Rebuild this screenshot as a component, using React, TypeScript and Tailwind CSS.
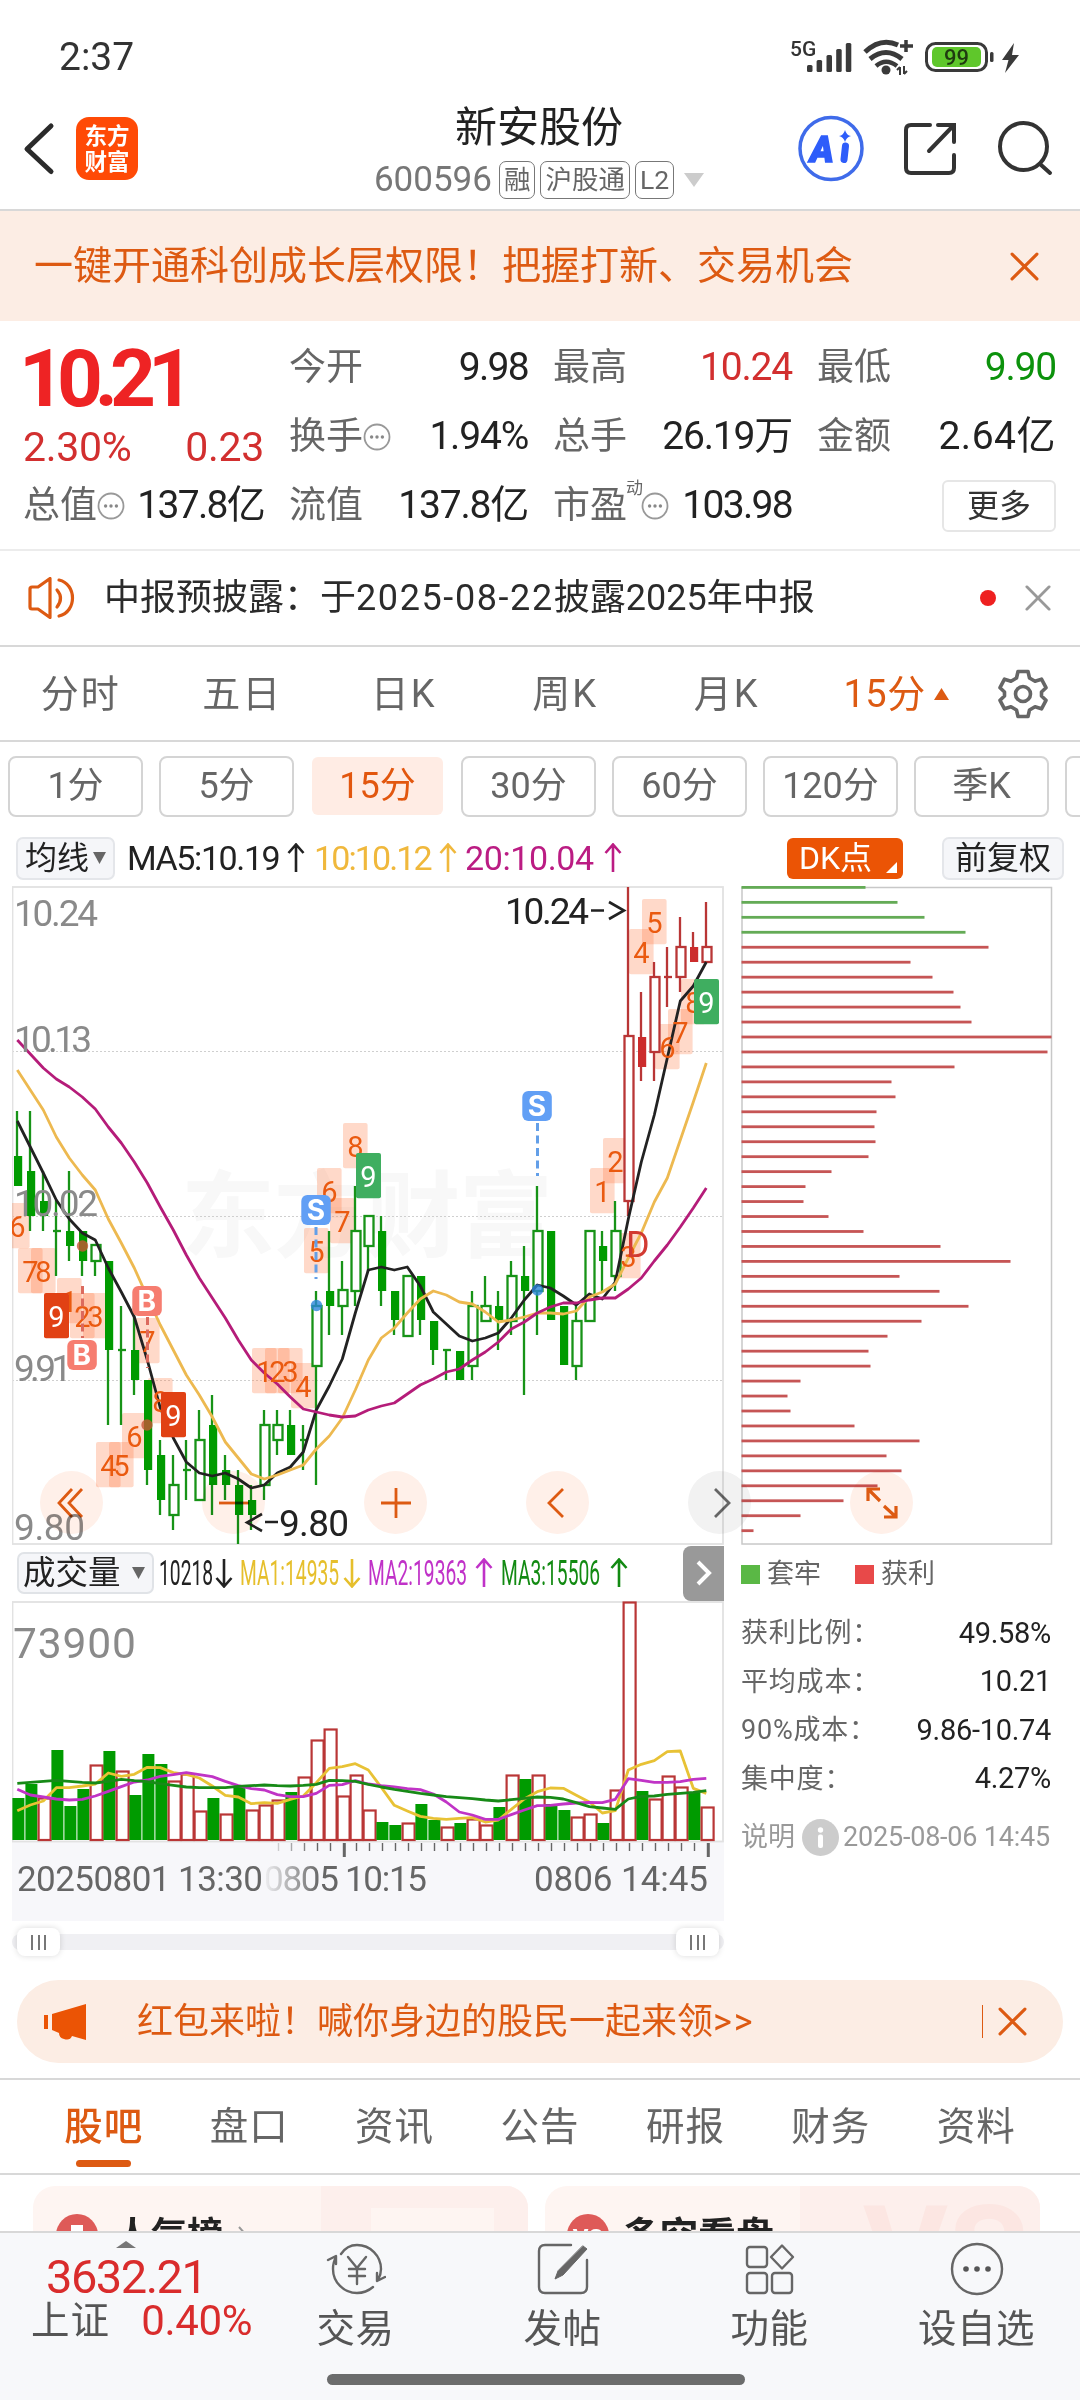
import type { ReactNode } from "react";

// x of the first candle and the distance between two candles
const X0 = 17.3;
const STEP = 13;
const cx = (i: number) => X0 + STEP * i;

// [body top, body bottom, high, low, kind]  f = filled, h = hollow, d = doji
type Candle = [number, number, number, number, "f" | "h" | "d"];

const CANDLES: Candle[] = [
  [1156, 1186, 1111, 1186, "f"], [1171, 1216, 1111, 1231, "f"], [1201, 1216, 1171, 1231, "f"], [1231, 1231, 1200, 1276, "d"],
  [1231, 1246, 1171, 1261, "f"], [1231, 1261, 1231, 1276, "f"], [1245, 1261, 1245, 1276, "h"], [1261, 1350, 1261, 1425, "f"],
  [1350, 1350, 1306, 1425, "d"], [1350, 1380, 1306, 1395, "f"], [1380, 1470, 1380, 1485, "f"], [1455, 1500, 1440, 1515, "f"],
  [1485, 1515, 1455, 1530, "h"], [1470, 1470, 1440, 1500, "d"], [1440, 1500, 1410, 1500, "h"], [1425, 1485, 1395, 1515, "f"],
  [1470, 1485, 1455, 1500, "f"], [1485, 1515, 1470, 1544, "f"], [1500, 1515, 1485, 1530, "f"], [1425, 1485, 1410, 1500, "h"],
  [1425, 1440, 1410, 1455, "h"], [1425, 1455, 1410, 1455, "f"], [1440, 1440, 1425, 1470, "d"], [1306, 1366, 1291, 1485, "h"],
  [1291, 1306, 1231, 1335, "f"], [1290, 1306, 1261, 1335, "h"], [1231, 1291, 1186, 1306, "h"], [1216, 1246, 1216, 1272, "h"],
  [1231, 1291, 1216, 1306, "f"], [1291, 1320, 1291, 1335, "f"], [1276, 1336, 1276, 1336, "h"], [1276, 1320, 1276, 1335, "f"],
  [1321, 1350, 1321, 1365, "f"], [1350, 1350, 1350, 1380, "d"], [1351, 1380, 1351, 1380, "f"], [1306, 1366, 1291, 1380, "h"],
  [1306, 1321, 1276, 1321, "h"], [1306, 1320, 1291, 1350, "f"], [1276, 1321, 1261, 1335, "h"], [1276, 1291, 1246, 1395, "f"],
  [1231, 1291, 1186, 1335, "h"], [1231, 1320, 1231, 1320, "f"], [1306, 1365, 1306, 1365, "f"], [1321, 1366, 1306, 1380, "h"],
  [1231, 1321, 1231, 1321, "h"], [1246, 1261, 1231, 1291, "f"], [1231, 1276, 1201, 1291, "h"], [1036, 1201, 887, 1216, "h"],
  [1037, 1067, 992, 1081, "f"], [977, 1052, 962, 1081, "h"], [977, 977, 947, 1007, "d"], [947, 977, 917, 992, "h"],
  [947, 962, 932, 962, "f"], [947, 962, 902, 962, "h"],
];

const MA5 = [
  1121, 1147, 1173, 1200, 1219, 1233, 1240, 1268, 1292, 1317, 1360, 1408, 1438, 1462, 1473, 1476, 1473, 1479, 1488, 1485, 1473, 1467,
  1452, 1410, 1386, 1359, 1313, 1270, 1267, 1270, 1267, 1286, 1312, 1324, 1336, 1341, 1338, 1333, 1318, 1300, 1285, 1288, 1296, 1305,
  1294, 1299, 1282, 1219, 1162, 1115, 1058, 1001, 986, 962,
];
const MA10 = [
  1070, 1090, 1110, 1137, 1158, 1175, 1190, 1219, 1243, 1268, 1297, 1325, 1350, 1375, 1395, 1417, 1442, 1458, 1474, 1479, 1475, 1470,
  1465, 1449, 1436, 1418, 1390, 1360, 1338, 1328, 1313, 1299, 1291, 1295, 1302, 1304, 1312, 1322, 1320, 1317, 1313, 1313, 1314, 1311,
  1297, 1292, 1284, 1258, 1233, 1202, 1178, 1140, 1102, 1063,
];
const MA20 = [
  1040, 1054, 1068, 1079, 1087, 1097, 1109, 1127, 1143, 1162, 1183, 1207, 1230, 1255, 1278, 1298, 1318, 1340, 1360, 1373, 1384, 1397,
  1409, 1412, 1415, 1417, 1416, 1410, 1406, 1403, 1394, 1385, 1379, 1372, 1369, 1360, 1352, 1342, 1329, 1322, 1313, 1307, 1303, 1303,
  1300, 1298, 1298, 1289, 1278, 1261, 1245, 1227, 1208, 1188,
];

// [candle index, box top, digit, fill]
const MARKS: [number, number, string, string?][] = [
  [0, 1203, "6"], [1, 1248, "7"], [2, 1248, "8"], [4, 1278, "1"], [3, 1293, "9", "#e14114"], [5, 1293, "2"], [6, 1293, "3"],
  [7, 1442, "4"], [8, 1442, "5"], [9, 1413, "6"], [10, 1318, "7"], [11, 1378, "8"], [12, 1392, "9", "#e14114"],
  [19, 1348, "1"], [20, 1348, "2"], [21, 1348, "3"], [22, 1363, "4"], [23, 1228, "5"], [24, 1168, "6"], [25, 1198, "7"],
  [26, 1123, "8"], [27, 1153, "9", "#3fae60"], [45, 1168, "1"], [46, 1138, "2"], [47, 1233, "3"], [48, 929, "4"], [49, 899, "5"],
  [50, 1024, "6"], [51, 1009, "7"], [52, 979, "8"], [53, 979, "9", "#3fae60"],
];

// volume bars: [top, up or down]
const VOLUMES: [number, "r" | "g"][] = [
  [1798, "g"], [1784, "g"], [1798, "r"], [1750, "g"], [1806, "g"], [1789, "g"], [1765, "r"], [1751, "g"], [1771, "r"], [1795, "g"],
  [1754, "g"], [1764, "g"], [1781, "r"], [1774, "r"], [1811, "r"], [1798, "g"], [1814, "r"], [1786, "g"], [1810, "r"], [1805, "r"],
  [1800, "r"], [1792, "g"], [1777, "r"], [1740, "r"], [1729, "r"], [1796, "r"], [1775, "r"], [1810, "r"], [1822, "g"], [1825, "g"],
  [1823, "r"], [1804, "g"], [1820, "g"], [1827, "r"], [1823, "g"], [1819, "r"], [1825, "r"], [1807, "g"], [1775, "r"], [1779, "g"],
  [1775, "r"], [1804, "g"], [1810, "g"], [1817, "r"], [1814, "r"], [1823, "g"], [1790, "r"], [1602, "r"], [1791, "g"], [1799, "r"],
  [1776, "r"], [1787, "r"], [1792, "g"], [1807, "r"],
];
const VMA1 = [
  812, 795, 783, 743, 743, 738, 732, 699, 709, 703, 682, 683, 698, 703, 714, 738, 766, 771, 791, 788, 790, 778, 768, 728, 685, 680,
  671, 690, 742, 796, 813, 829, 835, 838, 835, 833, 846, 840, 808, 777, 755, 744, 745, 766, 786, 819, 812, 690, 673, 662, 635, 633, 745, 760,
];
const VMA2 = [
  748, 765, 771, 777, 780, 778, 768, 754, 740, 726, 720, 709, 704, 698, 704, 710, 724, 737, 746, 750, 764, 770, 770, 760, 736, 734,
  722, 732, 737, 741, 746, 749, 762, 786, 816, 825, 838, 838, 824, 810, 797, 796, 792, 789, 787, 788, 778, 716, 721, 727, 727, 725, 718, 715,
];
const VMA3 = [
  730, 727, 724, 721, 724, 727, 729, 724, 718, 722, 725, 731, 736, 741, 743, 743, 743, 739, 737, 735, 737, 738, 736, 733, 721, 722,
  724, 733, 741, 748, 754, 760, 765, 770, 773, 776, 780, 783, 779, 775, 771, 772, 777, 788, 800, 804, 808, 777, 769, 768, 763, 760, 757, 752,
];

// lengths of the cost distribution lines, top to bottom
const COSTS = [
  124, 156, 183, 224, 247, 169, 191, 212, 219, 230, 310, 306, 213, 150, 154, 135, 133, 134, 127, 90, 64, 62, 87, 122, 199, 269, 158,
  198, 227, 180, 146, 127, 129, 59, 46, 49, 113, 178, 145, 160, 136, 102, 59, 12,
];

const line = (ys: number[]) => ys.map((y, i) => `${cx(i)},${y}`).join(" ");
const volLine = (vs: number[]) => vs.map((v, i) => `${cx(i)},${1540 + v / 3}`).join(" ");

function Cross({ size, color, width = 3 }: { size: number; color: string; width?: number }) {
  return (
    <svg width={size} height={size} viewBox="0 0 28 28" fill="none" stroke={color} strokeWidth={width} strokeLinecap="round">
      <path d="M2 2 26 26M26 2 2 26" />
    </svg>
  );
}

function Dots() {
  return (
    <svg width="28" height="28" viewBox="0 0 28 28" className="shrink-0">
      <circle cx="14" cy="14" r="12.5" fill="none" stroke="#999" strokeWidth="1.8" />
      <circle cx="8.6" cy="14" r="1.7" fill="#888" />
      <circle cx="14" cy="14" r="1.7" fill="#888" />
      <circle cx="19.4" cy="14" r="1.7" fill="#888" />
    </svg>
  );
}

function StatusBar() {
  return (
    <div className="flex h-[90px] items-center pt-[24px] pl-[59px] pr-[59px] text-[#333]">
      <span className="text-[39px] leading-[40px]">2:37</span>
      <svg className="ml-auto" width="232" height="40" viewBox="790 37 232 40">
        <text x="791" y="56" fontSize="21" fontWeight="500" fill="#333">5G</text>
        <g fill="#3a3a3a">
          <rect x="808" y="65" width="5.5" height="7" rx="1.5" />
          <rect x="817.6" y="60" width="5.5" height="12" rx="1.5" />
          <rect x="827.5" y="55" width="5.5" height="17" rx="1.5" />
          <rect x="837.2" y="49" width="5.5" height="23" rx="1.5" />
          <rect x="846.8" y="43" width="5.5" height="29" rx="1.5" />
        </g>
        <g fill="none" stroke="#3a3a3a" strokeWidth="5">
          <path d="M866 52Q882 37 899 45" />
          <path d="M871 59Q887 46 903 59" />
          <path d="M877 66Q887 57.5 898 66" strokeWidth="4.5" />
        </g>
        <circle cx="887" cy="70" r="4.5" fill="#3a3a3a" />
        <path d="M907 40v12M901 46h13" stroke="#3a3a3a" strokeWidth="3.5" />
        <path d="M901 75V67M898 70l3-3M905 66v8M908 71l-3 3" stroke="#3a3a3a" strokeWidth="2" fill="none" />
        <rect x="927.5" y="43.5" width="60" height="27" rx="9" fill="#fff" stroke="#3a3a3a" strokeWidth="3" />
        <rect x="933" y="47" width="49" height="20" rx="5" fill="#5fc72b" />
        <text x="957.5" y="64.5" fontSize="22" fontWeight="500" fill="#1f3a10" textAnchor="middle">99</text>
        <rect x="991" y="52" width="3.5" height="10" rx="1.5" fill="#3a3a3a" />
        <path d="M1015 43 1003 60h6.5L1006 73 1020 55h-7z" fill="#3a3a3a" />
      </svg>
    </div>
  );
}

function Tag({ children }: { children: ReactNode }) {
  return (
    <span className="flex h-[38px] shrink-0 items-center rounded-[7px] border border-[#777] px-[4px] text-[26.5px] leading-none whitespace-nowrap text-[#666]">
      {children}
    </span>
  );
}

function Header() {
  return (
    <header className="flex h-[121px] border-b-2 border-[#d8d8d8]">
      <div className="flex w-[374px] items-start pt-[26px] pl-[23px]">
        <svg width="32" height="66" viewBox="23 116 32 66" fill="none" stroke="#2b2b2b" strokeWidth="5" strokeLinejoin="round" strokeLinecap="round">
          <path d="M51 126 27 149l24 22.5" />
        </svg>
        <div className="mt-[1px] ml-[21px] flex h-[63px] w-[62px] flex-col items-center justify-center rounded-[13px] bg-[#ff4a06] text-[22.5px] leading-[26px] font-bold text-white">
          <span>东方</span>
          <span>财富</span>
        </div>
      </div>
      <div className="flex w-[330px] flex-col items-center">
        <h1 className="mt-[12px] text-[42px] leading-[52px] text-[#222]">新安股份</h1>
        <div className="mt-[7px] flex items-center gap-[5px] text-[#777]">
          <span className="mr-[2px] text-[35px] leading-[38px]">600596</span>
          <Tag>融</Tag>
          <Tag>沪股通</Tag>
          <Tag>L2</Tag>
          <svg className="ml-[5px] shrink-0" width="20" height="14" viewBox="0 0 20 14"><path d="M0 0h20L10 14z" fill="#ccc" /></svg>
        </div>
      </div>
      <svg className="ml-auto" width="284" height="119" viewBox="796 90 284 119" fill="none" strokeLinecap="round">
        <circle cx="831" cy="148.5" r="31" stroke="#3f6bea" strokeWidth="3.5" />
        <text x="810" y="161.5" fontSize="36" fontWeight="900" fontStyle="italic" fill="#2e5dfa" stroke="#2e5dfa" strokeWidth="1.5" textLength="26">A</text>
        <path d="M845.500 146 844 159.500" stroke="#2e5dfa" strokeWidth="7" />
        <path d="M845 130q1.500 5.500 6 6-4.500 1-6 6-1.500-5-6-6 4.500-.5 6-6z" fill="#2e5dfa" />
        <g stroke="#333" strokeWidth="4">
          <path d="M930 125H911q-5 0-5 5v38q0 5 5 5h38q5 0 5-5V155" />
          <path d="M929 151 953 126M938 125h16v17" />
          <circle cx="1023.5" cy="146.5" r="23.5" />
          <path d="M1040 164l10 9" />
        </g>
      </svg>
    </header>
  );
}

type CellProps = { label: string; value: string; color?: string; spacing?: string; dots?: boolean; mark?: string };

function Cell({ label, value, color = "text-[#222]", spacing = "tracking-[-1.2px]", dots, mark }: CellProps) {
  return (
    <div className="flex h-[69px] items-center justify-between whitespace-nowrap">
      <span className="flex items-center text-[37px] text-[#666]">
        {label}
        {mark && <sup className="-top-[17px] -mr-[2px] -ml-[1px] text-[17px] leading-none">{mark}</sup>}
        {dots && <Dots />}
      </span>
      <span className={`text-[39px] ${spacing} ${color}`}>{value}</span>
    </div>
  );
}

function Quote() {
  return (
    <section className="flex h-[230px] gap-[25px] border-b-2 border-[#ececec] pt-[12px] pr-[24px] pl-[23px]">
      <div className="flex w-[241px] flex-col">
        <div className="-ml-[4px] flex h-[92px] items-center text-[80px] leading-none font-bold tracking-[-8px] text-[#ee2324]">10.21</div>
        <div className="flex h-[46px] items-center justify-between text-[41px] tracking-[-0.3px] text-[#d22f2f]">
          <span>2.30%</span>
          <span>0.23</span>
        </div>
        <Cell label="总值" value="137.8亿" dots spacing="tracking-[-1.7px]" />
      </div>
      <div className="grid flex-1 grid-cols-3 content-start gap-x-[25px]">
        <Cell label="今开" value="9.98" spacing="tracking-[-1.7px]" />
        <Cell label="最高" value="10.24" color="text-[#d22f2f]" />
        <Cell label="最低" value="9.90" color="text-[#0c920c]" />
        <Cell label="换手" value="1.94%" dots />
        <Cell label="总手" value="26.19万" />
        <Cell label="金额" value="2.64亿" spacing="tracking-[0.5px]" />
        <Cell label="流值" value="137.8亿" />
        <Cell label="市盈" value="103.98" dots mark="动" spacing="tracking-[-1.7px]" />
        <div className="flex items-center justify-end">
          <button className="h-[52px] w-[114px] rounded-[6px] border-2 border-[#e6e6e6] text-[32px] leading-none text-[#333]">更多</button>
        </div>
      </div>
    </section>
  );
}

function News() {
  return (
    <section className="flex h-[96px] items-center border-b-2 border-[#d8d8d8] pl-[27px] text-[36px] text-[#2b2b2b]">
      <svg width="48" height="42" viewBox="26 576 48 42" fill="none" stroke="#dd5a12" strokeWidth="3.2" strokeLinejoin="round" strokeLinecap="round">
        <path d="M29 588q0-2 2-2h6l12-8.500v39L37 608h-6q-2 0-2-2z" />
        <path d="M56 589q7 8 0 17" />
        <path d="M58 579c18 4 18 32 0 36" />
      </svg>
      <span className="ml-[29px]">中报预披露：于</span>
      <span className="tracking-[1.6px]">2025-08-22</span>
      <span>披露2025年中报</span>
      <span className="mr-[29px] ml-auto size-[16px] rounded-full bg-[#ee2020]" />
      <span className="mr-[29px]"><Cross size={26} color="#999" /></span>
    </section>
  );
}

function Periods() {
  const tabs = ["分时", "五日", "日K", "周K", "月K"];
  const pills = ["1分", "5分", "15分", "30分", "60分", "120分", "季K"];
  return (
    <>
      <nav className="flex h-[95px] items-center border-b-2 border-[#d8d8d8] pt-[1px] text-[38px] tracking-[2px] text-[#666]">
        {tabs.map((t) => (
          <span key={t} className="w-[161.5px] text-center">{t}</span>
        ))}
        <span className="ml-[36px] flex items-center gap-[8px] tracking-[0.5px] text-[#dd5a12]">
          15分
          <svg width="15" height="12" viewBox="0 0 15 12"><path d="M7.500 0 15 12H0z" fill="#dd5a12" /></svg>
        </span>
        <svg className="mr-[32px] ml-auto" width="50" height="50" viewBox="0 0 50 50" fill="none" stroke="#666" strokeWidth="3.6" strokeLinejoin="round">
          <path d="M20 2.500h10l1.500 6.500 5.500 3.200 6.500-2 4.500 8.500-4.500 4.300v4l4.500 4.300-4.500 8.500-6.500-2-5.500 3.200L30 47.500H20L18.500 41 13 37.800l-6.500 2L2 31.300 6.500 27v-4L2 18.700l4.500-8.500 6.500 2L18.500 9z" />
          <circle cx="25" cy="25" r="7.5" />
        </svg>
      </nav>
      <div className="flex h-[88px] items-center gap-[16px] overflow-hidden pl-[8px] text-[36px] text-[#666]">
        {pills.map((p) =>
          p === "15分" ? (
            <span key={p} className="mx-[2px] flex h-[58px] w-[131px] shrink-0 items-center justify-center rounded-[6px] bg-[#ffece4] text-[#e2570f]">{p}</span>
          ) : (
            <span key={p} className="flex h-[61px] w-[135px] shrink-0 items-center justify-center rounded-[8px] border-2 border-[#d4d4d4]">{p}</span>
          ),
        )}
        <span className="h-[61px] w-[135px] shrink-0 rounded-[8px] border-2 border-[#d4d4d4]" />
      </div>
    </>
  );
}

function Arrow({ down }: { down?: boolean }) {
  return (
    <svg width="18" height="30" viewBox="0 0 18 30" fill="none" stroke="currentColor" strokeWidth="2.6" className={down ? "rotate-180" : ""}>
      <path d="M9 29V2M1.500 10 9 1.500 16.500 10" />
    </svg>
  );
}

function Averages() {
  return (
    <div className="flex h-[56px] items-center pl-[16px] text-[34px] leading-none text-[#222]">
      <span className="flex h-[43px] w-[99px] items-center rounded-[7px] border-2 border-[#e4e6ea] bg-[#f5f6f9] pl-[7px] text-[32px]">
        均线
        <svg className="ml-[4px]" width="13" height="12" viewBox="0 0 13 12"><path d="M0 0h13L6.500 12z" fill="#666" /></svg>
      </span>
      <span className="ml-[12px] w-[160px] tracking-[-1.4px]">MA5:10.19</span>
      <Arrow />
      <span className="ml-[9px] flex w-[143px] items-center justify-between text-[#f0b83c]"><span className="tracking-[-1.9px]">10:10.12</span><Arrow /></span>
      <span className="ml-[8px] flex w-[157px] items-center justify-between text-[#bb1c83]"><span className="tracking-[-0.4px]">20:10.04</span><Arrow /></span>
      <span className="relative ml-auto flex h-[41px] w-[116px] items-center rounded-[6px] bg-[#eb5405] pl-[12px] text-[32px] text-white">
        DK点
        <svg className="absolute right-[6px] bottom-[6px]" width="11" height="11" viewBox="0 0 11 11"><path d="M11 0v11H0z" fill="#fff" /></svg>
      </span>
      <span className="mr-[16px] ml-[39px] flex h-[43px] w-[122px] items-center justify-center rounded-[7px] border-2 border-[#e4e6ea] bg-[#f5f6f9] text-[32px]">前复权</span>
    </div>
  );
}

function Badge({ i, y, text, color }: { i: number; y: number; text: string; color: string }) {
  return (
    <g>
      <rect x={cx(i) - 15} y={y} width="29.5" height="30" rx="6" fill={color} />
      <text x={cx(i) - 0.5} y={y + 25} fontSize="28" fontWeight="700" fill="#fff" textAnchor="middle" fontFamily="Inter">{text}</text>
    </g>
  );
}

function KLine() {
  return (
    <svg width="712" height="659" viewBox="12 886 712 659" className="block">
      <text x="181" y="1250" fontSize="94" fontWeight="700" fill="#f8f8f8" textLength="372">东方财富</text>
      <path d="M12 1051.500H723M12 1216.500H723M12 1380.500H723" stroke="#cfcfcf" strokeDasharray="2 2" />
      <rect x="12.5" y="887" width="710.5" height="657" fill="none" stroke="#e2e2e2" strokeWidth="1.8" />
      <text x="14" y="1380.5" fontSize="37" fill="#8a8a8a" textLength="58">9.91</text>
      {MARKS.filter((m) => !m[3]).map(([i, y, d]) => (
        <rect key={`${i}${d}`} x={cx(i) - 12.3} y={y} width="24.6" height="45.3" rx="2" fill="#ff763c" fillOpacity=".28" />
      ))}
      {CANDLES.map(([t, b, h, l, kind], i) => {
        const c = i >= 47 ? "#b93636" : "#179317";
        const solid = i >= 47 ? "#cc2c2c" : "#009b00";
        const x = cx(i);
        return (
          <g key={i} stroke={c} strokeWidth="2.3">
            {h < t && <path d={`M${x - 0.3} ${h}V${t}`} />}
            {l > b && <path d={`M${x - 0.3} ${b}V${l}`} />}
            {kind === "f" && <rect x={x - 3.3} y={t} width="8.2" height={b - t} fill={solid} stroke="none" />}
            {kind === "h" && <rect x={x - 3.8} y={t} width="9" height={b - t} fill="#fff" />}
            {kind === "d" && <path d={`M${x - 3.3} ${t}h8`} />}
          </g>
        );
      })}
      <g fill="none" strokeWidth="2.8" strokeLinejoin="round">
        <polyline points={line(MA5)} stroke="#222" />
        <polyline points={line(MA10)} stroke="#edb950" />
        <polyline points={line(MA20)} stroke="#b51c79" />
      </g>
      <g fontSize="29" textAnchor="middle">
        {MARKS.map(([i, y, d, fill]) => (
          <g key={`${i}${d}`}>
            {fill && <rect x={cx(i) - 12.3} y={y} width="25" height="45.3" rx="2" fill={fill} />}
            <text x={cx(i)} y={y + 33.5} fill={fill ? "#fff" : "#ea5a10"}>{d}</text>
          </g>
        ))}
      </g>
      <g strokeWidth="3" strokeDasharray="8 4.5" fill="none">
        <path d="M316 1227V1279M537.500 1123V1176" stroke="#639fe8" />
        <path d="M147.500 1317V1368M82.500 1286V1338" stroke="#dc6a5e" />
      </g>
      <Badge i={23} y={1195} text="S" color="#619ff5" />
      <Badge i={40} y={1091} text="S" color="#619ff5" />
      <Badge i={10} y={1286} text="B" color="#f67d70" />
      <Badge i={5} y={1340} text="B" color="#f67d70" />
      <g fillOpacity=".8">
        <circle cx="316.5" cy="1305.5" r="5.7" fill="#2d86db" />
        <circle cx="537.5" cy="1290" r="5.7" fill="#2d86db" />
        <circle cx="147" cy="1425" r="5.7" fill="#c85535" />
        <circle cx="82.5" cy="1246" r="5.7" fill="#c85535" />
      </g>
      <text x="626" y="1257" fontSize="36" fill="#d23a32">D</text>
      <g fontSize="37" fill="#8a8a8a">
        <text x="14" y="926" textLength="84">10.24</text>
        <text x="14" y="1052" textLength="78">10.13</text>
        <text x="14" y="1216" textLength="84">10.02</text>
        <text x="14" y="1540" textLength="71">9.80</text>
      </g>
      <g fill="#222" fontSize="37">
        <text x="505" y="924" textLength="84">10.24</text>
        <text x="279" y="1535.5" textLength="70">9.80</text>
      </g>
      <g fill="none" stroke="#222" strokeWidth="2.6">
        <path d="M591 910.500h13M609 902l15 8.500-15 8.500" />
        <path d="M265 1522h13M262 1514l-15 8.500 15 8.500" />
      </g>
    </svg>
  );
}

function RoundButton({ className, grey, children }: { className: string; grey?: boolean; children: ReactNode }) {
  return (
    <button
      className={`absolute top-[585px] flex size-[63px] items-center justify-center rounded-full mix-blend-multiply ${grey ? "bg-[#f2f2f2]" : "bg-[#fff0e9]"} ${className}`}
    >
      <svg width="32" height="32" viewBox="0 0 32 32" fill="none" stroke={grey ? "#666" : "#dd5a12"} strokeWidth="2.8">
        {children}
      </svg>
    </button>
  );
}

function CostChart() {
  return (
    <svg width="312" height="659" viewBox="740.5 886 312 659" className="block">
      <rect x="741.5" y="887.5" width="309.5" height="656.5" fill="none" stroke="#c8c8c8" strokeWidth="1.5" />
      {COSTS.map((w, i) => (
        <rect key={i} x="741" y={886 + i * 14.96} width={w} height="2.8" fill={i < 4 ? "#64ab56" : "#c65555"} />
      ))}
    </svg>
  );
}

function Condensed({ width, color, down, children }: { width: string; color: string; down?: boolean; children: string }) {
  return (
    <span className={`flex items-center ${width} ${color}`}>
      <span className="w-0 flex-1 origin-left scale-x-[0.55] whitespace-nowrap">{children}</span>
      <Arrow down={down} />
    </span>
  );
}

function VolumeHead() {
  return (
    <div className="flex h-[56px] items-center pl-[5px] text-[35px] leading-none">
      <span className="flex h-[42px] w-[137px] items-center justify-between rounded-[7px] border-2 border-[#e0e3e7] bg-[#f5f6f9] pr-[7px] pl-[4px] text-[32.5px] text-[#222]">
        成交量
        <svg width="13" height="12" viewBox="0 0 13 12"><path d="M0 0h13L6.500 12z" fill="#666" /></svg>
      </span>
      <span className="w-[5px]" />
      <Condensed width="w-[74px]" color="text-[#222]" down>10218</Condensed>
      <span className="w-[7px]" />
      <Condensed width="w-[121px]" color="text-[#e6bf2c]" down>MA1:14935</Condensed>
      <span className="w-[7px]" />
      <Condensed width="w-[125px]" color="text-[#c032c8]">MA2:19363</Condensed>
      <span className="w-[8px]" />
      <Condensed width="w-[127px]" color="text-[#128a12]">MA3:15506</Condensed>
      <span className="ml-auto flex h-[55px] w-[41px] items-center justify-center rounded-l-[8px] bg-[#999]">
        <svg width="16" height="26" viewBox="0 0 16 26" fill="none" stroke="#fff" strokeWidth="4"><path d="M2 2 13 13 2 24" /></svg>
      </span>
    </div>
  );
}

function VolumeChart() {
  return (
    <svg width="712" height="320" viewBox="12 1601 712 320" className="block">
      <defs>
        <linearGradient id="fade" gradientUnits="userSpaceOnUse" x1="264" x2="320" y1="0" y2="0">
          <stop offset="0" stopColor="#666" stopOpacity=".05" />
          <stop offset="1" stopColor="#666" />
        </linearGradient>
      </defs>
      <rect x="12" y="1842" width="712" height="79" fill="#f7f7fa" />
      <rect x="12.5" y="1602" width="710.5" height="239.5" fill="none" stroke="#e2e2e2" strokeWidth="1.8" />
      <text x="13" y="1658" fontSize="42.5" fill="#8a8a8a" textLength="123">73900</text>
      {VOLUMES.map(([y, c], i) =>
        c === "g" ? (
          <rect key={i} x={cx(i) - 4.9} y={y} width="12" height={1840 - y} fill="#009b00" />
        ) : (
          <rect key={i} x={cx(i) - 4.7} y={y + 0.5} width="12" height={1839.5 - y} fill="#fff" stroke="#b93636" strokeWidth="2.2" />
        ),
      )}
      <g fill="none" strokeWidth="2.8" strokeLinejoin="round">
        <polyline points={volLine(VMA1)} stroke="#e8c235" />
        <polyline points={volLine(VMA2)} stroke="#c034c6" />
        <polyline points={volLine(VMA3)} stroke="#178a17" />
      </g>
      {Array.from({ length: 34 }, (_, k) => k + 20).map((i) => {
        const major = i === 25 || i === 53;
        return (
          <rect
            key={i}
            x={cx(i) + 0.5}
            y="1843"
            width={major ? 3 : 1.4}
            height={major ? 14 : 8}
            fill="#666"
            opacity={i < 23 ? 0.3 + (i - 20) * 0.25 : 1}
          />
        );
      })}
      <g fontSize="35" fill="#666">
        <text x="17" y="1891" textLength="246">20250801 13:30</text>
        <text x="264" y="1891" textLength="163" fill="url(#fade)">0805 10:15</text>
        <text x="534" y="1891" textLength="174">0806 14:45</text>
      </g>
    </svg>
  );
}

function Handle() {
  return (
    <span className="flex h-[28px] w-[43px] items-center justify-center gap-[4.5px] rounded-[8px] bg-white shadow-[0_0_6px_rgba(0,0,0,0.15)]">
      <i className="h-[15px] w-[2px] bg-[#777]" />
      <i className="h-[15px] w-[2px] bg-[#777]" />
      <i className="h-[15px] w-[2px] bg-[#777]" />
    </span>
  );
}

function CostInfo() {
  const rows = [
    ["获利比例：", "49.58%"],
    ["平均成本：", "10.21"],
    ["90%成本：", "9.86-10.74"],
    ["集中度：", "4.27%"],
  ];
  return (
    <div className="w-[310px] text-[27px] text-[#666]">
      <div className="flex h-[58px] items-center">
        <i className="mr-[7px] size-[19px] bg-[#5ab845]" />套牢
        <i className="mr-[7px] ml-[34px] size-[19px] bg-[#e84949]" />获利
      </div>
      <div className="mt-[6px]">
        {rows.map(([k, v]) => (
          <div key={k} className="flex h-[48.5px] items-center justify-between">
            <span className="tracking-[0.8px]">{k}</span>
            <span className="text-[29px] tracking-[-0.3px] text-[#222]">{v}</span>
          </div>
        ))}
      </div>
      <div className="mt-[9px] flex h-[50px] items-center whitespace-nowrap text-[#999]">
        说明
        <svg className="mr-[4px] ml-[7px] shrink-0" width="37" height="37" viewBox="0 0 37 37">
          <circle cx="18.5" cy="18.5" r="18.5" fill="#ccc" />
          <circle cx="18.5" cy="11" r="2.7" fill="#fff" />
          <rect x="16" y="15.5" width="5" height="13.5" rx="2" fill="#fff" />
        </svg>
        <span className="tracking-[-0.2px]">2025-08-06 14:45</span>
      </div>
    </div>
  );
}

function Charts() {
  return (
    <section className="relative flex h-[1074px] gap-[17px] pl-[12px]">
      <div className="w-[712px]">
        <KLine />
        <VolumeHead />
        <VolumeChart />
        <div className="mt-[13px] flex h-[16px] items-center justify-between rounded-full bg-[#f0f0f3] px-[5px]">
          <Handle />
          <Handle />
        </div>
      </div>
      <div className="w-[312px]">
        <CostChart />
        <CostInfo />
      </div>
      <RoundButton className="left-[40px]"><path d="M16 2 3 16l13 14M26 2 13 16l13 14" /></RoundButton>
      <RoundButton className="left-[202px]"><path d="M1 16h30" /></RoundButton>
      <RoundButton className="left-[364px]"><path d="M1 16h30M16 1v30" /></RoundButton>
      <RoundButton className="left-[526px]"><path d="M21 2 7 16l14 14" /></RoundButton>
      <RoundButton className="left-[688px]" grey><path d="M11 2 25 16 11 30" /></RoundButton>
      <RoundButton className="left-[850px]">
        <path d="M14 2H2v12M2 2l12 12M30 19v11H18M30 30 18 19" strokeWidth="3.2" />
      </RoundButton>
    </section>
  );
}

function Promo() {
  return (
    <div className="mx-[17px] mt-[20px] flex h-[83px] items-center rounded-full bg-[#fcede4] text-[36px] text-[#dd5a12]">
      <svg className="ml-[27px]" width="43" height="38" viewBox="0 0 43 38" fill="#eb5405">
        <rect x="0" y="12" width="4" height="14" />
        <path d="M8 11 42 1v36l-14-4q-2 5-8 3-5-1-5-6l-7-3z" />
      </svg>
      <span className="ml-[50px]">红包来啦！喊你身边的股民一起来领</span>
      <span className="tracking-[2px]">&gt;&gt;</span>
      <i className="mr-[15px] ml-auto h-[33px] w-[1.5px] bg-[#dd5a12]" />
      <span className="mr-[36px]"><Cross size={29} color="#dd5a12" /></span>
    </div>
  );
}

function Community() {
  const tabs = ["股吧", "盘口", "资讯", "公告", "研报", "财务", "资料"];
  return (
    <>
      <nav className="mt-[15px] flex h-[97px] border-y-2 border-[#d8d8d8] px-[31px] text-[38.5px] tracking-[1px] text-[#666]">
        {tabs.map((t, i) => (
          <span key={t} className={`flex flex-1 flex-col items-center pt-[18px] leading-[58px] ${i === 0 ? "font-medium text-[#dd5a12]" : ""}`}>
            {t}
            {i === 0 && <i className="mt-[4px] h-[7px] w-[55px] rounded-full bg-[#dd5a12]" />}
          </span>
        ))}
      </nav>
      <div className="flex h-[56px] gap-[17px] overflow-hidden px-[33px] pt-[11px] text-[36px] leading-[50px] font-bold text-[#222]">
        <div className="relative flex h-[120px] w-[495px] overflow-hidden rounded-[22px] bg-[#fef5f2] pt-[25px] pl-[23px]">
          <i className="absolute top-0 right-0 h-[120px] w-[207px] bg-[#fdefec]" />
          <i className="absolute top-[22px] left-[338px] h-[90px] w-[123px] bg-[#fef5f2]" />
          <span className="relative mt-[3px] mr-[17px] flex size-[42px] justify-center rounded-full bg-[#de5a58]"><i className="mt-[11px] h-[20px] w-[12px] bg-white" /></span>
          <span className="relative">人气榜</span>
          <svg className="relative mt-[15px] ml-[15px]" width="10" height="20" viewBox="0 0 10 20" fill="none" stroke="#999" strokeWidth="2"><path d="M1 1 9 10 1 19" /></svg>
        </div>
        <div className="relative flex h-[120px] w-[495px] overflow-hidden rounded-[22px] bg-[#fef5f2] pt-[25px] pl-[22px]">
          <i className="absolute top-0 right-0 h-[120px] w-[240px] bg-[#fdefec]" />
          <span className="absolute top-[18px] right-[12px] text-[130px] leading-[100px] text-[#fce6e2]">VS</span>
          <span className="relative mt-[3px] mr-[13px] flex size-[42px] justify-center rounded-full bg-[#de5a58] text-[24px] leading-[48px] text-white">VS</span>
          <span className="relative text-[38px]">多空看盘</span>
        </div>
      </div>
    </>
  );
}

function NavItem({ label, children }: { label: string; children: ReactNode }) {
  return (
    <div className="flex w-[207px] flex-col items-center pt-[9px]">
      <svg width="60" height="54" viewBox="0 0 60 54" fill="none" stroke="#666" strokeWidth="2.4" strokeLinecap="round" strokeLinejoin="round">
        {children}
      </svg>
      <span className="mt-[6px] text-[38.5px] leading-[54px] tracking-[0.5px] text-[#555]">{label}</span>
    </div>
  );
}

function BottomBar() {
  return (
    <footer className="h-[169px] border-t-2 border-[#d8d8d8] bg-[#f7f8fa]">
      <div className="flex h-[140px]">
        <div className="w-[252px] pl-[31px] text-[#d92c2c]">
          <svg className="mt-[8px] ml-[85px] block" width="20" height="7" viewBox="0 0 20 7"><path d="M10 0 20 7H0z" fill="#777" /></svg>
          <div className="mt-[5px] ml-[15px] text-[47px] leading-[48px] tracking-[-1.5px]">3632.21</div>
          <div className="-mt-[5px] flex items-center justify-between text-[42px] leading-[50px] tracking-[-0.4px]">
            <span className="text-[38.5px] tracking-[1px] text-[#555]">上证</span>0.40%
          </div>
        </div>
        <NavItem label="交易">
          <path d="M15 12q6-9 16-9a24 24 0 0 1 24 24q0 6-3 11M47 45q-7 6-16 6A24 24 0 0 1 7 27q0-7 3-12M2 18l8-4v8M59 35l-8 4v-8" />
          <path d="M22 15l9 11 9-11M31 26v16M23 27h16M23 34h16" />
        </NavItem>
        <NavItem label="发帖">
          <path d="M38 3H12q-6 0-6 6v36q0 6 6 6h36q6 0 6-6V18" />
          <path d="M50 4l4 3L30 33l-8 4 3-8z" fill="#666" strokeWidth="1" />
        </NavItem>
        <NavItem label="功能">
          <rect x="7" y="5" width="20" height="20" rx="3" />
          <rect x="7" y="31" width="20" height="20" rx="3" />
          <rect x="32" y="31" width="20" height="20" rx="3" />
          <path d="M42 3.500 53 15 42 26.500 31 15z" />
        </NavItem>
        <NavItem label="设自选">
          <circle cx="30" cy="27" r="25" />
          <g fill="#555" stroke="none"><circle cx="19" cy="27" r="2.8" /><circle cx="30" cy="27" r="2.8" /><circle cx="41" cy="27" r="2.8" /></g>
        </NavItem>
      </div>
      <div className="mt-[1px] ml-[327px] h-[11px] w-[418px] rounded-full bg-[#6b6c6c]" />
    </footer>
  );
}

export default function App() {
  return (
    <main className="h-[2400px] w-[1080px] overflow-hidden bg-white font-['Roboto','Noto_Sans_CJK_SC',sans-serif]">
      <StatusBar />
      <Header />
      <div className="flex h-[110px] items-center bg-[#fcede4] pl-[34px] text-[39px] text-[#dd5a12]">
        一键开通科创成长层权限！把握打新、交易机会
        <span className="mr-[41px] ml-auto"><Cross size={29} color="#dd5a12" /></span>
      </div>
      <Quote />
      <News />
      <Periods />
      <Averages />
      <Charts />
      <Promo />
      <Community />
      <BottomBar />
    </main>
  );
}
